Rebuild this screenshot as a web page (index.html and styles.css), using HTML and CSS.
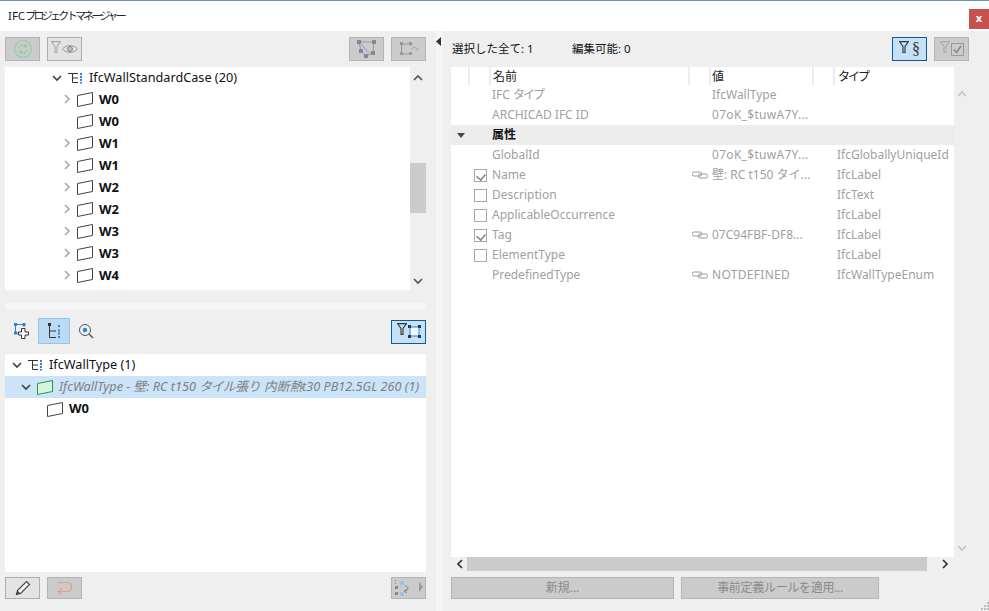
FILE: index.html
```html
<!DOCTYPE html>
<html lang="ja">
<head>
<meta charset="utf-8">
<title>IFCプロジェクトマネージャー</title>
<link rel="stylesheet" href="styles.css">
</head>
<body>
<svg class="sprite" xmlns="http://www.w3.org/2000/svg">
  <symbol id="wall" viewBox="0 0 16 16"><path d="M.5 4.500 15.500 1.500V12.500L.5 15.500Z" fill="#fff" stroke="#444"/></symbol>
  <symbol id="wallgreen" viewBox="0 0 16 16"><path d="M.5 4.500 15.500 1.500V12.500L.5 15.500Z" fill="#d6f5dc" stroke="#1f9a4a"/></symbol>
  <symbol id="chevd" viewBox="0 0 10 10"><path d="M1 3 5 7 9 3" fill="none" stroke="#444" stroke-width="1.700"/></symbol>
  <symbol id="chevr" viewBox="0 0 10 10"><path d="M3 1 7 5 3 9" fill="none" stroke="#aaa" stroke-width="1.700"/></symbol>
  <symbol id="type" viewBox="0 0 16 16"><path d="M0 3.500H10M4.500 3.500V12.500H10M4.500 8H10" fill="none" stroke="#333"/><path d="M12 3h2v2h-2zM12 6h2v2h-2zM12 9h2v2h-2zM12 12h2v1.500h-2z" fill="#2f7fe6"/></symbol>
  <symbol id="link" viewBox="0 0 16 10"><rect x=".5" y="2" width="9" height="4" rx="1.500" fill="none" stroke="#999"/><rect x="6.500" y="4" width="9" height="4" rx="1.500" fill="none" stroke="#999"/></symbol>
  <symbol id="funnel" viewBox="0 0 10 12"><path d="M.5 .6H9.500L6 5.500V11.500H4V5.500Z" fill="none" stroke="currentColor" stroke-width="1.100"/></symbol>
</svg>

<header class="titlebar">
  <span class="title">IFC<span class="ktitle">プロジェクトマネージャー</span></span>
  <span class="close">x</span>
</header>

<main class="main">
  <section class="left">
    <div class="toolbar top">
      <button class="btn off"><svg width="20" height="20" viewBox="0 0 20 20"><circle cx="10" cy="10" r="8.500" fill="none" stroke="#8ed0a4" stroke-width="1.200"/><path d="M5.500 9.500C6 6.500 10 5 13 7.500M12 4.800 13.500 7.800 10.500 8M14.500 10.500C14 13.500 10 15 7 12.500M8 15.200 6.500 12.200 9.500 12" fill="none" stroke="#8ed0a4" stroke-width="1.200"/></svg></button>
      <button class="btn soft"><svg class="dim up" width="10" height="12"><use href="#funnel"/></svg><svg width="16" height="10" viewBox="0 0 16 10"><path d="M.5 5C4 .5 12 .5 15.500 5 12 9.500 4 9.500 .5 5Z" fill="none" stroke="#999"/><circle cx="8" cy="5" r="2.500" fill="#bbb" stroke="#888"/></svg></button>
      <span class="spacer"></span>
      <button class="btn off"><svg width="22" height="20" viewBox="0 0 22 20"><path d="M3 3H18L17 14 10 17 5 12Z" fill="none" stroke="#999"/><path d="M5 5 13 14" stroke="#8fb5e6" stroke-width="1.500"/><path d="M1 1h4v4H1zM16 1h4v4h-4zM15 12h4v4h-4zM8 15h4v4H8zM3 10h4v4H3z" fill="#888"/></svg></button>
      <button class="btn off"><svg width="20" height="16" viewBox="0 0 20 16"><path d="M2.500 3H12M2.500 3V13H12M12 3V5M12 11V13" fill="none" stroke="#999"/><path d="M1 1h3v3H1zM10 1h3v3h-3zM1 11h3v3H1zM10 11h3v3h-3z" fill="#999"/><path d="M12 9C14 5 18 6 18.500 9M16.500 8 18.500 9.500 19.500 7.500" fill="none" stroke="#aaa"/></svg></button>
    </div>

    <div class="treebox upper">
      <div class="tree clip">
        <div class="row lead t1"><span class="chev"><svg width="10" height="10"><use href="#chevd"/></svg></span><svg class="ic" width="16" height="16"><use href="#type"/></svg><span class="lift">IfcWallStandardCase (20)</span></div>
        <div class="row t2"><span class="chev"><svg width="10" height="10"><use href="#chevr"/></svg></span><svg class="ic" width="16" height="16"><use href="#wall"/></svg><b>W0</b></div>
        <div class="row t2"><span class="chev"></span><svg class="ic" width="16" height="16"><use href="#wall"/></svg><b>W0</b></div>
        <div class="row t2"><span class="chev"><svg width="10" height="10"><use href="#chevr"/></svg></span><svg class="ic" width="16" height="16"><use href="#wall"/></svg><b>W1</b></div>
        <div class="row t2"><span class="chev"><svg width="10" height="10"><use href="#chevr"/></svg></span><svg class="ic" width="16" height="16"><use href="#wall"/></svg><b>W1</b></div>
        <div class="row t2"><span class="chev"><svg width="10" height="10"><use href="#chevr"/></svg></span><svg class="ic" width="16" height="16"><use href="#wall"/></svg><b>W2</b></div>
        <div class="row t2"><span class="chev"><svg width="10" height="10"><use href="#chevr"/></svg></span><svg class="ic" width="16" height="16"><use href="#wall"/></svg><b>W2</b></div>
        <div class="row t2"><span class="chev"><svg width="10" height="10"><use href="#chevr"/></svg></span><svg class="ic" width="16" height="16"><use href="#wall"/></svg><b>W3</b></div>
        <div class="row t2"><span class="chev"><svg width="10" height="10"><use href="#chevr"/></svg></span><svg class="ic" width="16" height="16"><use href="#wall"/></svg><b>W3</b></div>
        <div class="row t2"><span class="chev"><svg width="10" height="10"><use href="#chevr"/></svg></span><svg class="ic" width="16" height="16"><use href="#wall"/></svg><b>W4</b></div>
      </div>
      <div class="vscroll">
        <svg class="arrow" width="10" height="10" viewBox="0 0 10 10"><path d="M1 7 5 3 9 7" fill="none" stroke="#555" stroke-width="1.700"/></svg>
        <div class="thumb"></div>
        <svg class="arrow" width="10" height="10" viewBox="0 0 10 10"><path d="M1 3 5 7 9 3" fill="none" stroke="#555" stroke-width="1.700"/></svg>
      </div>
    </div>

    <div class="strip"></div>

    <div class="toolbar mid">
      <button class="tool first"><svg width="18" height="18" viewBox="0 0 18 18"><path d="M2.500 2.500H11M2.500 2.500V11H5M11 2.500V5" fill="none" stroke="#2f7fe6"/><path d="M1 1h3v3H1zM9.500 1h3v3H9.500zM1 9.500h3v3H1z" fill="#2f7fe6"/><path d="M8.500 6.500H12V10H15.500V13H12V16.500H8.500V13H5.500V10H8.500Z" fill="#fff" stroke="#333"/></svg></button>
      <button class="tool on"><svg width="16" height="18" viewBox="0 0 16 18"><path d="M3.500 4V15.500H10M3.500 9H10" fill="none" stroke="#333"/><path d="M2 1h3v3H2z" fill="#333"/><path d="M12 3h2v2h-2zM12 7.500h2v2h-2zM12 14h2v2h-2zM12 10.500h2v2h-2z" fill="#2f7fe6"/></svg></button>
      <button class="tool"><svg width="16" height="16" viewBox="0 0 16 16"><circle cx="7" cy="7" r="5.500" fill="none" stroke="#555"/><circle cx="7" cy="7" r="2.200" fill="#2f7fe6"/><path d="M11 11 15 15" stroke="#555" stroke-width="1.500"/></svg></button>
      <span class="spacer"></span>
      <button class="btn active small"><svg class="dark up" width="10" height="12"><use href="#funnel"/></svg><svg width="13" height="13" viewBox="0 0 13 13"><path d="M2 2H11V11H2Z" fill="#f2f8fd" stroke="#2f7fe6"/><path d="M0 0h3v3H0zM10 0h3v3h-3zM0 10h3v3H0zM10 10h3v3h-3z" fill="#243a52"/></svg></button>
    </div>

    <div class="tree lower">
      <div class="row p1"><span class="chev"><svg width="10" height="10"><use href="#chevd"/></svg></span><svg class="ic" width="16" height="16"><use href="#type"/></svg><span class="lift">IfcWallType (1)</span></div>
      <div class="row p2 sel"><span class="chev"><svg width="10" height="10"><use href="#chevd"/></svg></span><svg class="ic" width="16" height="16"><use href="#wallgreen"/></svg><i class="lift">IfcWallType - 壁: RC t150 <span class="kana">タイル</span>張り 内断熱t30 PB12.5GL 260 (1)</i></div>
      <div class="row p3"><svg class="ic" width="16" height="16"><use href="#wall"/></svg><b class="lift">W0</b></div>
    </div>

    <div class="toolbar bottom">
      <button class="btn soft"><svg width="16" height="16" viewBox="0 0 16 16"><path d="M1.500 14.500 2.500 10.500 11.500 1.500 14.500 4.500 5.500 13.500Z" fill="#fff" stroke="#444" stroke-width="1.200"/><path d="M1.500 14.500 2.500 10.500 5.500 13.500Z" fill="#444"/></svg></button>
      <button class="btn off"><svg width="16" height="14" viewBox="0 0 16 14"><path d="M1 1.500H10C16 1.500 16 10.500 10 10.500H2M5 7.500 1.500 10.500 5 13.500" fill="none" stroke="#eb9b8c" stroke-width="1.200"/></svg></button>
      <span class="spacer"></span>
      <button class="btn off"><svg width="30" height="18" viewBox="0 0 30 18"><path d="M1 1h1v1H1zM1 4h1v1H1zM1 7h3v3H1zM1 13h3v3H1z" fill="#888"/><path d="M6 2h4v4H6zM6 13h4v4H6z" fill="#9cc0ec"/><path d="M11 7C15 6 15 12 11 12M13 14 10 12 13 10" fill="none" stroke="#888"/><path d="M25 3 29 8 25 13Z" fill="#999"/></svg></button>
    </div>
  </section>

  <div class="gutter"></div>

  <div class="splitter"><svg width="5" height="9" viewBox="0 0 5 9"><path d="M5 0V9L0 4.500Z" fill="#333"/></svg></div>

  <section class="right">
    <div class="summary">
      <span class="count first">選択した全て: 1</span>
      <span class="count">編集可能: 0</span>
      <span class="spacer"></span>
      <button class="btn active"><svg class="dark up" width="10" height="12"><use href="#funnel"/></svg><span class="sect">§</span></button>
      <button class="btn off"><svg class="dim up" width="10" height="12"><use href="#funnel"/></svg><svg width="13" height="13" viewBox="0 0 13 13"><rect x=".5" y=".5" width="12" height="12" fill="none" stroke="#999"/><path d="M3 6.500 5.500 9.500 10 3" fill="none" stroke="#888" stroke-width="1.500"/></svg></button>
    </div>

    <div class="tablewrap">
      <div class="table">
        <div class="thead">
          <span class="th w18"></span><span class="th w20"></span><span class="th w199">名前</span><span class="th w22"></span><span class="th w103">値</span><span class="th w20"></span><span class="th grow kana2">タイプ</span>
        </div>
        <div class="tr"><span></span><span></span><span>IFC <span class="kana2">タイプ</span></span><span></span><span>IfcWallType</span><span></span></div>
        <div class="tr"><span></span><span></span><span>ARCHICAD IFC ID</span><span></span><span class="wider">07oK_$tuwA7Y...</span><span></span></div>
        <div class="tr group"><span class="caret"></span><span></span><b>属性</b><span></span><span></span><span></span></div>
        <div class="tr"><span></span><span></span><span>GlobalId</span><span></span><span class="wider">07oK_$tuwA7Y...</span><span>IfcGloballyUniqueId</span></div>
        <div class="tr"><span></span><span class="cb checked"></span><span>Name</span><svg width="16" height="10"><use href="#link"/></svg><span>壁: RC t150 タイ...</span><span>IfcLabel</span></div>
        <div class="tr"><span></span><span class="cb"></span><span>Description</span><span></span><span></span><span>IfcText</span></div>
        <div class="tr"><span></span><span class="cb"></span><span>ApplicableOccurrence</span><span></span><span></span><span>IfcLabel</span></div>
        <div class="tr"><span></span><span class="cb checked"></span><span>Tag</span><svg width="16" height="10"><use href="#link"/></svg><span>07C94FBF-DF8...</span><span>IfcLabel</span></div>
        <div class="tr"><span></span><span class="cb"></span><span>ElementType</span><span></span><span></span><span>IfcLabel</span></div>
        <div class="tr"><span></span><span></span><span>PredefinedType</span><svg width="16" height="10"><use href="#link"/></svg><span class="wider">NOTDEFINED</span><span>IfcWallTypeEnum</span></div>
      </div>
      <div class="vscroll faint">
        <svg class="arrow" width="10" height="10" viewBox="0 0 10 10"><path d="M1 7 5 3 9 7" fill="none" stroke="#c4c4c4" stroke-width="1.700"/></svg>
        <svg class="arrow" width="10" height="10" viewBox="0 0 10 10"><path d="M1 3 5 7 9 3" fill="none" stroke="#c4c4c4" stroke-width="1.700"/></svg>
      </div>
    </div>

    <div class="hscroll">
      <svg width="8" height="10" viewBox="0 0 8 10"><path d="M6 1 2 5 6 9" fill="none" stroke="#333" stroke-width="1.700"/></svg>
      <div class="hthumb"></div>
      <svg width="8" height="10" viewBox="0 0 8 10"><path d="M2 1 6 5 2 9" fill="none" stroke="#333" stroke-width="1.700"/></svg>
    </div>

    <div class="actions">
      <button class="wide new">新規...</button>
      <button class="wide apply">事前定義ルールを適用...</button>
    </div>
  </section>
</main>
<svg class="grip" width="9" height="9" viewBox="0 0 9 9"><path d="M7 0h2v2H7zM4 3h2v2H4zM7 3h2v2H7zM1 6h2v2H1zM4 6h2v2H4zM7 6h2v2H7z" fill="#bbb"/></svg>
</body>
</html>
```

FILE: styles.css
```css
* { box-sizing: border-box; }
html, body { margin: 0; height: 100%; }
body {
  position: relative;
  width: 989px;
  height: 611px;
  overflow: hidden;
  display: flex;
  flex-direction: column;
  background: #efefef;
  color: #111;
  font: 12px/16px "Noto Sans", "Noto Sans CJK JP", sans-serif;
}
.sprite { display: none; }
svg { display: block; flex: none; }

.titlebar {
  height: 31px;
  flex: none;
  display: flex;
  justify-content: space-between;
  align-items: flex-start;
  padding: 7px 0 0 8px;
  background: #fff;
  border-top: 1px solid #6f93b3;
}
.title { font-size: 11.5px; line-height: 15px; color: #222; }
.ktitle { font-size: 11px; letter-spacing: -2.7px; }
.close {
  width: 20px;
  height: 20px;
  margin-top: 1px;
  background: #c75050;
  color: #fff;
  font-weight: 700;
  font-size: 11px;
  line-height: 17px;
  text-align: center;
}

.main { flex: 1; display: flex; min-height: 0; padding-left: 5px; }
.left { width: 421px; display: flex; flex-direction: column; }
.gutter { width: 10px; }
.splitter { width: 7px; background: #f5f5f5; padding: 6px 0 0 0; }
.right { width: 546px; padding-left: 8px; display: flex; flex-direction: column; }

.toolbar { display: flex; align-items: center; }
.toolbar.top { height: 24px; margin-top: 6px; gap: 7px; }
.toolbar.mid { height: 26px; margin-top: 8px; }
.toolbar.bottom { height: 22px; margin-top: 5px; gap: 7px; }
.spacer { flex: 1; }

.btn {
  width: 35px;
  height: 24px;
  padding: 0;
  display: flex;
  align-items: center;
  justify-content: center;
  gap: 1px;
  border: 1px solid #b4b4b4;
  background: #cbcbcb;
}
.btn.soft { background: #e3e3e3; border-color: #adadad; }
.btn.active { background: #c6e0f6; border-color: #0f5a96; }
.btn.small { margin-top: 1px; height: 24px; }
.toolbar.bottom .btn { height: 22px; }
.dim { color: #aaa; }
.dark { color: #333; }
.up { margin-top: -5px; }
.sect { font: 16px/20px "Liberation Serif", serif; color: #333; margin-left: 2px; }

.tool {
  width: 32px;
  height: 26px;
  padding: 0;
  display: flex;
  align-items: center;
  justify-content: center;
  border: 1px solid transparent;
  background: none;
}
.tool.first { width: 33px; }
.tool.on { background: #bcdaf4; border-color: #92c5f0; }

.treebox.upper { height: 223px; margin-top: 6px; display: flex; }
.tree { background: #fff; }
.tree.clip { width: 405px; overflow: hidden; }
.row { height: 22px; display: flex; align-items: center; font-size: 12.7px; white-space: nowrap; }
.row.lead { height: 21px; }
.row b { font-size: 13px; }
.lift { margin-bottom: 2px; }
.kana { letter-spacing: -1px; margin-right: 1px; }
.chev { width: 20px; flex: none; display: flex; justify-content: center; }
.ic { margin: 0 6px 0 0; }
.t1 { padding-left: 42px; }
.t1 .chev, .p1 .chev, .p2 .chev { margin-right: 1px; }
.t1 .ic, .p1 .ic { margin-right: 5px; }
.t2 { padding-left: 52px; }
.p1 { padding-left: 2px; }
.p2 { padding-left: 11px; }
.p3 { padding-left: 42px; }
.sel { background: #cce4fa; }
.sel i { color: #808080; }

.vscroll {
  width: 16px;
  display: flex;
  flex-direction: column;
  justify-content: space-between;
  align-items: center;
  padding: 6px 0 4px;
  position: relative;
}
.thumb {
  position: absolute;
  top: 96px;
  left: 0;
  width: 16px;
  height: 50px;
  background: #cbcbcb;
}
.strip { height: 7px; margin-top: 13px; background: #f5f5f5; }
.tree.lower { height: 218px; margin-top: 10px; }

.summary { height: 24px; margin-top: 6px; display: flex; align-items: center; padding-right: 20px; }
.count { width: 120px; font-size: 11.5px; }
.count.first { margin-left: 1px; }
.summary .btn + .btn { margin-left: 7px; }

.tablewrap { height: 490px; margin-top: 6px; display: flex; }
.table { width: 503px; background: #fff; font-size: 12px; color: #a0a0a0; }
.thead { height: 18px; display: flex; color: #222; line-height: 18px; }
.th { display: block; height: 18px; padding-top: 1px; border-right: 2px solid #ececec; flex: none; padding-left: 2px; white-space: nowrap; }
.w18 { width: 19px; }
.w20 { width: 21px; }
.w199 { width: 199px; }
.w22 { width: 21px; }
.w103 { width: 103px; padding-left: 1px; }
.grow { flex: 1; border-right: 0; padding-left: 3px; }
.kana2 { letter-spacing: -2px; }
.wider { letter-spacing: .3px; }
.tr {
  display: grid;
  grid-template-columns: 19px 20px 200px 21px 125px 1fr;
  height: 20px;
  align-items: center;
  white-space: nowrap;
}
.tr > span:nth-child(3), .tr > b { padding-left: 2px; }
.tr > svg { margin-left: 2px; }
.tr > span:nth-child(5) { padding-left: 1px; }
.tr > span:nth-child(6) { padding-left: 1px; }
.group { background: #ececec; color: #111; }
.caret {
  width: 0;
  height: 0;
  margin-left: 6px;
  border: 4px solid transparent;
  border-top: 5px solid #444;
  border-bottom: 0;
}
.cb {
  position: relative;
  width: 13px;
  height: 13px;
  margin-left: 4px;
  border: 1px solid #a8a8a8;
  background: #fff;
}
.cb.checked::after {
  content: "";
  position: absolute;
  left: 2px;
  top: 1px;
  width: 6px;
  height: 8px;
  border-right: 2px solid #888;
  border-bottom: 2px solid #888;
  transform: rotate(40deg) scale(.8);
}
.faint { padding: 22px 0 4px; }

.hscroll { width: 503px; height: 14px; display: flex; align-items: center; justify-content: space-between; padding: 0 5px; }
.hthumb { width: 460px; height: 14px; background: #cbcbcb; margin: 0 12px 0 0; }

.actions { display: flex; gap: 7px; margin-top: 6px; }
.wide {
  height: 22px;
  padding: 0;
  background: #cbcbcb;
  border: 1px solid #b4b4b4;
  color: #8a8a8a;
  font: 12px/16px "Noto Sans", "Noto Sans CJK JP", sans-serif;
}
.new { width: 223px; }
.apply { width: 198px; letter-spacing: -.3px; }
.grip { position: absolute; right: 0; bottom: 0; }
```
